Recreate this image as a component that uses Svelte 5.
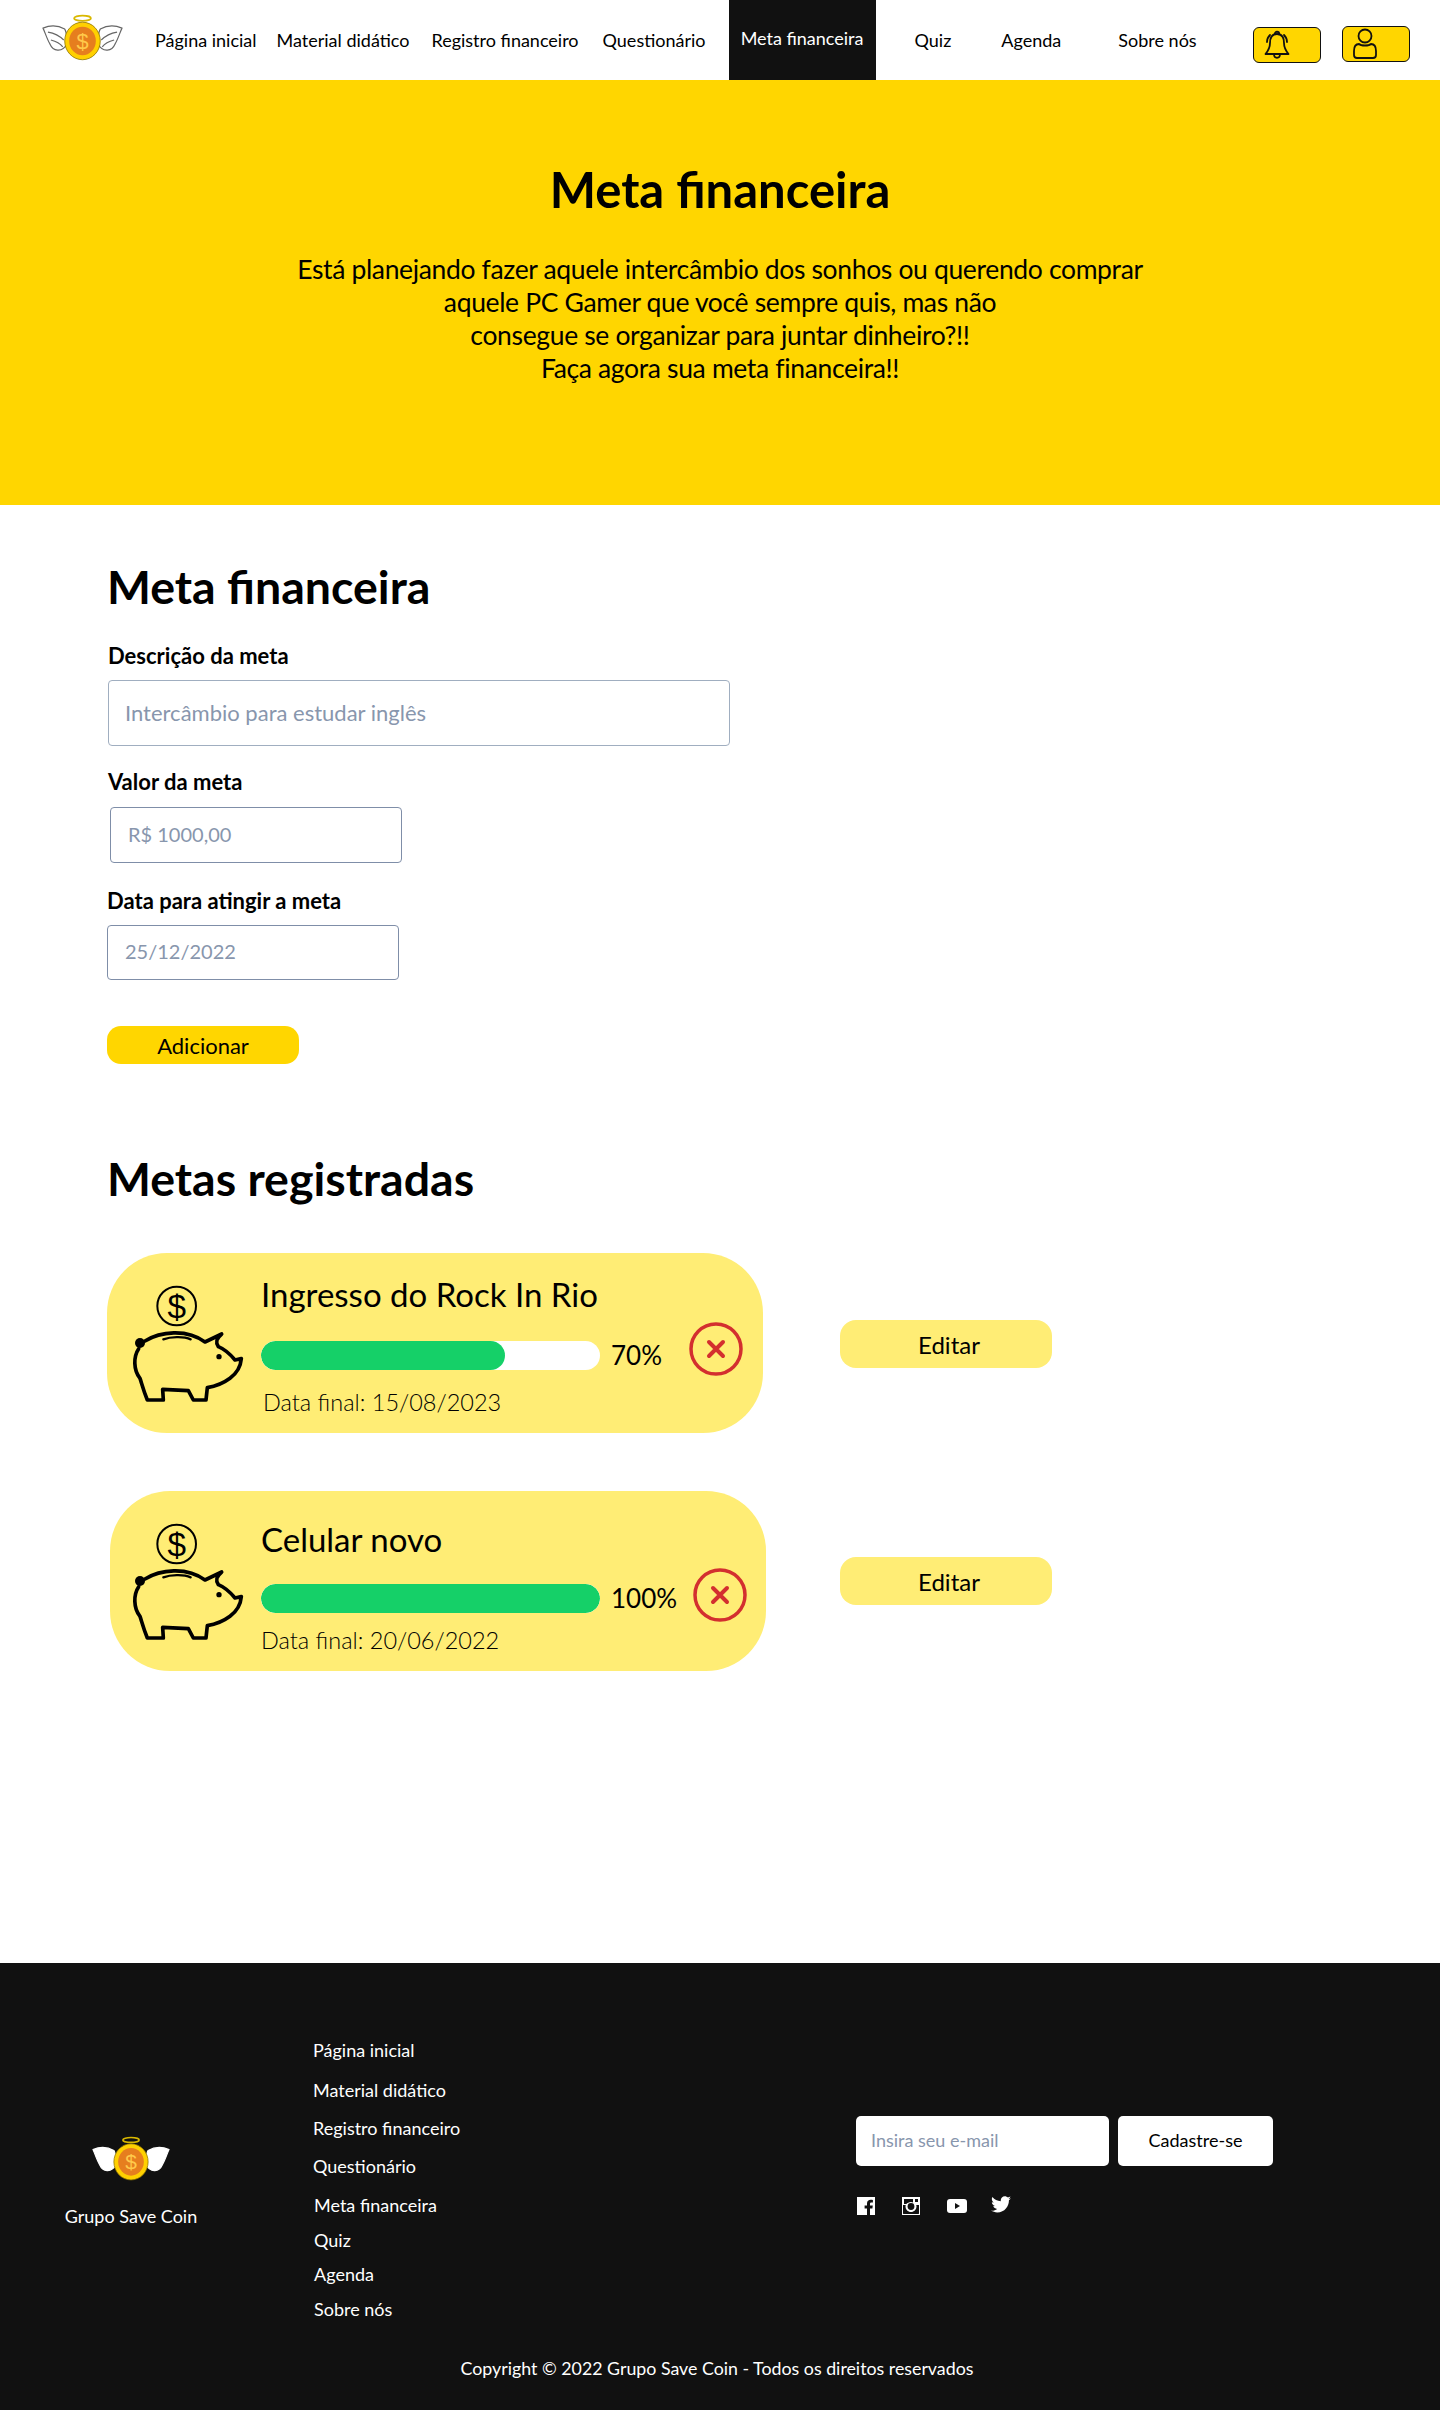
<script>
	const navLinks = [
		{ label: 'Página inicial' },
		{ label: 'Material didático' },
		{ label: 'Registro financeiro', cls: 'registro' },
		{ label: 'Questionário', cls: 'questionario' },
		{ label: 'Meta financeira', active: true },
		{ label: 'Quiz', cls: 'quiz' },
		{ label: 'Agenda', cls: 'agenda' },
		{ label: 'Sobre nós', cls: 'sobre' }
	];

	const footerLinks = navLinks.map((l) => l.label);

	const goals = [
		{ title: 'Ingresso do Rock In Rio', pct: 70, fill: 72, date: '15/08/2023' },
		{ title: 'Celular novo', pct: 100, fill: 100, date: '20/06/2022' }
	];
</script>

{#snippet logo(outline)}
	<svg class="logo" viewBox="0 0 82 48" aria-hidden="true">
		<ellipse cx="41" cy="4" rx="8.500" ry="2.600" fill="none" stroke="#d9b800" stroke-width="1.800" />
		<g fill="#fff" stroke={outline} stroke-width="1.200" stroke-linejoin="round">
			<path d="M26 29 C20 40 11 37 8 30 C5 25 3 18 1 14 C8 11 16 11 23 15 C25 18 25 24 26 29Z" />
			<path d="M56 29 C62 40 71 37 74 30 C77 25 79 18 81 14 C74 11 66 11 59 15 C57 18 57 24 56 29Z" />
			<path fill="none" d="M6 18 C12 19 18 22 22 26 M9 26 C13 27 18 29 21 33" />
			<path fill="none" d="M76 18 C70 19 64 22 60 26 M73 26 C69 27 64 29 61 33" />
		</g>
		<ellipse cx="41" cy="27" rx="18" ry="19" fill="#ffd000" stroke="#8a7200" stroke-width="0.800" />
		<ellipse cx="41" cy="27" rx="13.500" ry="14.500" fill="#e67e1e" />
		<text x="41" y="35" class="logo-sign">$</text>
	</svg>
{/snippet}

{#snippet pig()}
	<svg class="pig" viewBox="36 36 336 360" aria-hidden="true">
		<g fill="none" stroke="#000" stroke-linejoin="round" stroke-linecap="round">
			<circle cx="170" cy="108" r="58" stroke-width="6" />
			<path
				stroke-width="11"
				d="M75 213 C120 185 200 175 255 216 L305 192 C290 205 285 216 295 230 C320 240 335 258 345 270 L364 266 C362 290 350 310 330 325 C310 340 280 350 262 353 L258 390 L220 390 L205 362 L128 358 L130 390 L82 390 C70 360 65 340 60 325 C40 300 40 260 56 236"
			/>
			<path stroke-width="7" d="M130 208 C150 201 190 198 212 208" />
		</g>
		<text x="170" y="143" class="pig-sign">$</text>
		<circle cx="60" cy="219" r="15" fill="#000" />
		<circle cx="297" cy="260" r="8" fill="#000" />
	</svg>
{/snippet}

<header class="topbar">
	{@render logo('#666')}
	<nav class="nav">
		{#each navLinks as link}
			<a href="#top" class={link.cls} class:active={link.active}>{link.label}</a>
		{/each}
	</nav>
	<button class="icon-btn bell" aria-label="Notificações">
		<svg width="30" height="32" viewBox="0 0 30 32" fill="none" stroke="#111" stroke-width="1.800" stroke-linecap="round" stroke-linejoin="round">
			<path d="M15 5 C9 5 8 10 8 14 C8 19 6 22 3.500 25 L26.500 25 C24 22 22 19 22 14 C22 10 21 5 15 5Z" />
			<path d="M12.800 5 C12.800 2 17.200 2 17.200 5" />
			<path d="M12 25 C12 30 18 30 18 25" />
			<path d="M5 13 C5 10 6 8 8 6" />
			<path d="M25 13 C25 10 24 8 22 6" />
		</svg>
	</button>
	<button class="icon-btn user" aria-label="Perfil">
		<svg width="26" height="32" viewBox="0 0 26 32" fill="none" stroke="#111" stroke-width="1.800" stroke-linejoin="round">
			<circle cx="13" cy="8" r="6.500" />
			<path d="M7 16 C9 18 17 18 19 16 C23 16 24 19 24 23 L24 27 C24 29 23 30 21 30 L5 30 C3 30 2 29 2 27 L2 23 C2 19 3 16 7 16Z" />
		</svg>
	</button>
</header>

<section class="hero">
	<h1>Meta financeira</h1>
	<p>
		Está planejando fazer aquele intercâmbio dos sonhos ou querendo comprar<br />
		aquele PC Gamer que você sempre quis, mas não<br />
		consegue se organizar para juntar dinheiro?!!<br />
		Faça agora sua meta financeira!!
	</p>
</section>

<main class="content">
	<h2>Meta financeira</h2>
	<form class="goal-form" onsubmit={(e) => e.preventDefault()}>
		<label for="desc" class="lbl lbl-desc">Descrição da meta</label>
		<input id="desc" class="field field-desc" placeholder="Intercâmbio para estudar inglês" />
		<label for="valor" class="lbl lbl-valor">Valor da meta</label>
		<input id="valor" class="field field-valor" placeholder="R$ 1000,00" />
		<label for="data" class="lbl lbl-data">Data para atingir a meta</label>
		<input id="data" class="field field-data" placeholder="25/12/2022" />
		<button class="add-btn">Adicionar</button>
	</form>

	<h2 class="list-title">Metas registradas</h2>
	<div class="goals">
		{#each goals as goal}
			<div class="goal-row">
				<div class="goal-card">
					{@render pig()}
					<div class="goal-body">
						<h3>{goal.title}</h3>
						<div class="progress-line">
							<div class="track"><div class="fill" style="width: {goal.fill}%"></div></div>
							<span class="pct">{goal.pct}%</span>
						</div>
						<p class="date">Data final: {goal.date}</p>
					</div>
					<button class="remove" aria-label="Remover">
						<svg width="54" height="54" viewBox="0 0 54 54" fill="none" stroke="#d32f2f" stroke-linecap="round">
							<circle cx="27" cy="27" r="25" stroke-width="3.500" />
							<path d="M20 20 L34 34 M34 20 L20 34" stroke-width="4" />
						</svg>
					</button>
				</div>
				<button class="edit-btn">Editar</button>
			</div>
		{/each}
	</div>
</main>

<footer class="footer">
	<div class="footer-top">
		<div class="brand">
			{@render logo('#fff')}
			<span>Grupo Save Coin</span>
		</div>
		<ul class="footer-links">
			{#each footerLinks as label}
				<li><a href="#top">{label}</a></li>
			{/each}
		</ul>
		<div class="newsletter">
			<div class="signup">
				<input placeholder="Insira seu e-mail" />
				<button>Cadastre-se</button>
			</div>
			<div class="socials">
				<svg width="18" height="18" viewBox="0 0 18 18" aria-hidden="true">
					<path fill="#fff" d="M0 0H18V18H13V11.500H15.400L15.800 8.600H13V6.800C13 6 13.300 5.400 14.400 5.400H15.900V2.900C15.500 2.800 14.600 2.800 13.700 2.800C11.600 2.800 10 4.100 10 6.500V8.600H7.600V11.500H10V18H0Z" />
				</svg>
				<svg width="18" height="18" viewBox="0 0 18 18" aria-hidden="true">
					<path fill="#fff" d="M0 0H18V18H0Z" />
					<path fill="#111" d="M1 8H3.800C3.600 8.500 3.500 9 3.500 9.500C3.500 12.500 6 15 9 15C12 15 14.500 12.500 14.500 9.500C14.500 9 14.400 8.500 14.200 8H17V16.500C17 16.800 16.800 17 16.500 17H1.500C1.200 17 1 16.800 1 16.500Z" />
					<circle cx="9" cy="9.500" r="3.400" fill="#111" />
					<path fill="#111" d="M2 2H11V5.600C10.400 5.200 9.700 5 9 5C7 5 5.200 6 4.300 7H2Z" />
					<rect x="13" y="2" width="3" height="3" fill="#111" />
				</svg>
				<svg width="20" height="14" viewBox="0 0 20 14" aria-hidden="true">
					<rect width="20" height="14" rx="3" fill="#fff" />
					<path fill="#111" d="M8 4 L13 7 L8 10Z" />
				</svg>
				<svg class="twitter" width="20" height="17" viewBox="0 0 24 20" aria-hidden="true">
					<path fill="#fff" d="M24 2.400c-.9.400-1.800.7-2.800.8 1-.6 1.800-1.600 2.200-2.700-1 .6-2 1-3.100 1.200C19.300.7 18 0 16.600 0c-2.700 0-4.900 2.200-4.900 4.900 0 .4 0 .8.100 1.100C7.700 5.800 4.100 3.900 1.700.9c-.4.700-.7 1.600-.7 2.500 0 1.700.9 3.200 2.200 4.100-.8 0-1.600-.2-2.200-.6v.1c0 2.400 1.700 4.400 3.900 4.800-.4.100-.8.200-1.300.2-.3 0-.6 0-.9-.1.600 2 2.400 3.400 4.600 3.400-1.700 1.300-3.800 2.100-6.100 2.100-.4 0-.8 0-1.200-.1 2.200 1.400 4.800 2.200 7.500 2.200 9.100 0 14-7.500 14-14v-.6c1-.7 1.800-1.600 2.500-2.500z" />
				</svg>
			</div>
		</div>
	</div>
	<p class="copyright">Copyright © 2022 Grupo Save Coin - Todos os direitos reservados</p>
</footer>
<div class="page-end"></div>

<style>
	:global(body) {
		margin: 0;
		background: #fff;
		font-family: Lato, 'Noto Sans', sans-serif;
		color: #000;
	}

	button {
		font-family: inherit;
		cursor: pointer;
	}

	.topbar {
		display: flex;
		align-items: center;
		height: 80px;
		padding-left: 42px;
		background: #fff;
	}

	.logo {
		width: 81px;
		height: 48px;
		flex-shrink: 0;
		margin-top: -4px;
	}

	.logo-sign {
		font-family: 'Liberation Sans', sans-serif;
		font-size: 22px;
		fill: #ffc94a;
		text-anchor: middle;
	}

	.nav {
		display: flex;
		align-items: center;
		height: 80px;
		gap: 20px;
		margin-left: 32px;
	}

	.nav a {
		font-size: 18px;
		color: #000;
		text-decoration: none;
		white-space: nowrap;
	}

	.nav a.registro {
		margin-left: 2px;
	}

	.nav a.questionario {
		margin-left: 4px;
		margin-right: 3px;
	}

	.nav a.active {
		display: flex;
		align-items: center;
		justify-content: center;
		width: 147px;
		height: 80px;
		padding-bottom: 4px;
		box-sizing: border-box;
		background: #111;
		color: #fff;
	}

	.nav a.quiz {
		margin-left: 19px;
	}

	.nav a.agenda {
		margin-left: 30px;
	}

	.nav a.sobre {
		margin-left: 37px;
	}

	.icon-btn {
		display: flex;
		align-items: center;
		width: 68px;
		height: 36px;
		padding: 0 0 0 8px;
		background: #ffd600;
		border: 1.500px solid #111;
		border-radius: 6px;
	}

	.bell {
		margin-left: 56px;
		margin-top: 10px;
	}

	.user {
		margin-left: 21px;
		margin-top: 8px;
		padding-left: 9px;
	}

	.hero {
		height: 425px;
		box-sizing: border-box;
		padding-top: 79px;
		background: #ffd600;
		text-align: center;
	}

	h1 {
		margin: 0 0 34px;
		font-size: 49px;
		line-height: 60px;
		font-weight: 700;
	}

	.hero p {
		margin: 0;
		font-size: 26.500px;
		letter-spacing: -0.350px;
		line-height: 33px;
	}

	.content {
		height: 1458px;
		box-sizing: border-box;
		padding: 52px 0 0 107px;
	}

	h2 {
		margin: 0;
		font-size: 46.500px;
		line-height: 58px;
		font-weight: 700;
	}

	.goal-form {
		display: flex;
		flex-direction: column;
		align-items: flex-start;
		margin-top: 27px;
	}

	.lbl {
		font-size: 22px;
		line-height: 27px;
		font-weight: 700;
	}

	.lbl-desc,
	.lbl-valor {
		margin-left: 1px;
	}

	.field {
		box-sizing: border-box;
		background: #fff;
		font-family: inherit;
		border: 1.500px solid #a0aec0;
		border-radius: 4px;
		outline: none;
	}

	.field::placeholder {
		color: #8896ad;
		opacity: 1;
	}

	.field-desc {
		width: 622px;
		height: 66px;
		margin: 11px 0 22px 1px;
		padding: 0 16px 1px;
		font-size: 22px;
	}

	.field-valor {
		width: 292px;
		height: 56px;
		margin: 12px 0 24px 3px;
		padding: 0 17px 2px;
		font-size: 20px;
		border-color: #7f8ea8;
	}

	.field-data {
		width: 292px;
		height: 55px;
		margin-top: 11px;
		padding: 0 17px 3px;
		font-size: 20px;
		border-color: #7f8ea8;
	}

	.add-btn {
		width: 192px;
		height: 38px;
		margin-top: 46px;
		padding: 0;
		font-size: 22px;
		color: #000;
		background: #ffd600;
		border: none;
		border-radius: 14px;
	}

	.list-title {
		margin-top: 85px;
	}

	.goals {
		display: flex;
		flex-direction: column;
		gap: 58px;
		margin-top: 46px;
	}

	.goal-row {
		display: flex;
		align-items: center;
	}

	.goal-card {
		display: flex;
		align-items: flex-start;
		box-sizing: border-box;
		width: 656px;
		height: 180px;
		padding: 29px 0 0 25px;
		background: #ffed75;
		border-radius: 60px;
	}

	.goal-row:nth-child(2) .goal-card {
		margin-left: 3px;
		padding-left: 22px;
	}

	.pig {
		width: 112px;
		height: 120px;
		flex-shrink: 0;
	}

	.pig-sign {
		font-family: 'Liberation Sans', sans-serif;
		font-size: 100px;
		text-anchor: middle;
		fill: #000;
	}

	.goal-body {
		width: 428px;
		margin: -8px 0 0 17px;
		flex-shrink: 0;
	}

	.goal-row:nth-child(2) .goal-body {
		width: 432px;
	}

	h3 {
		margin: 0;
		font-size: 33px;
		line-height: 40px;
		font-weight: 400;
	}

	.goal-row:nth-child(2) h3 {
		margin-top: 7px;
	}

	.progress-line {
		display: flex;
		align-items: center;
		margin-top: 25px;
	}

	.goal-row:nth-child(2) .progress-line {
		margin-top: 23px;
	}

	.track {
		flex-shrink: 0;
		width: 339px;
		height: 29px;
		background: #fff;
		border-radius: 15px;
		overflow: hidden;
	}

	.fill {
		height: 100%;
		background: #15d068;
		border-radius: 15px;
	}

	.pct {
		margin-left: 11px;
		font-size: 26px;
	}

	.date {
		margin: 15px 0 0 2px;
		font-size: 23.500px;
		line-height: 32px;
		font-weight: 300;
	}

	.goal-row:nth-child(2) .date {
		margin-left: 0;
		margin-top: 10px;
	}

	.remove {
		display: flex;
		margin: 40px 0 0 0;
		padding: 0;
		background: none;
		border: none;
	}

	.goal-row:nth-child(2) .remove {
		margin-top: 48px;
	}

	.edit-btn {
		width: 212px;
		height: 48px;
		margin-left: 77px;
		margin-top: 2px;
		padding: 0 0 0 6px;
		font-size: 24px;
		color: #000;
		background: #ffed75;
		border: none;
		border-radius: 16px;
	}

	.goal-row:nth-child(2) .edit-btn {
		margin-left: 74px;
		margin-top: 0;
	}

	.footer {
		height: 447px;
		box-sizing: border-box;
		padding-top: 76px;
		background: #111;
		color: #fff;
	}

	.footer-top {
		display: flex;
		align-items: flex-start;
	}

	.brand {
		display: flex;
		flex-direction: column;
		align-items: center;
		width: 262px;
		margin-top: 97px;
		font-size: 18px;
		line-height: 24px;
	}

	.brand .logo {
		width: 78px;
		height: 46px;
		margin: 0 0 22px;
	}

	.footer-links {
		width: 543px;
		margin: 0 0 0 51px;
		padding: 0;
		list-style: none;
		font-size: 18px;
		line-height: 22px;
	}

	.footer-links a {
		color: #fff;
		text-decoration: none;
	}

	.footer-links li:nth-child(1) {
		margin-bottom: 18px;
	}

	.footer-links li:nth-child(2),
	.footer-links li:nth-child(3) {
		margin-bottom: 16px;
	}

	.footer-links li:nth-child(4) {
		margin-bottom: 17px;
	}

	.footer-links li:nth-child(n + 5) {
		margin-bottom: 12.500px;
		margin-left: 1px;
	}

	.newsletter {
		margin-top: 77px;
	}

	.signup {
		display: flex;
		gap: 9px;
	}

	.signup input {
		box-sizing: border-box;
		width: 253px;
		height: 50px;
		padding: 0 15px 2px;
		font-family: inherit;
		font-size: 18px;
		background: #fff;
		border: none;
		border-radius: 5px;
		outline: none;
	}

	.signup input::placeholder {
		color: #8896ad;
		opacity: 1;
	}

	.signup button {
		width: 155px;
		height: 50px;
		padding: 0 0 2px;
		font-size: 18px;
		color: #000;
		background: #fff;
		border: none;
		border-radius: 5px;
	}

	.socials {
		display: flex;
		align-items: center;
		gap: 27px;
		margin: 31px 0 0 1px;
	}

	.twitter {
		margin-left: -3px;
		margin-top: -4px;
	}

	.copyright {
		margin: 25px 0 0;
		font-size: 17.800px;
		line-height: 22px;
		text-align: center;
		padding-right: 6px;
	}

	.page-end {
		height: 6px;
	}
</style>
